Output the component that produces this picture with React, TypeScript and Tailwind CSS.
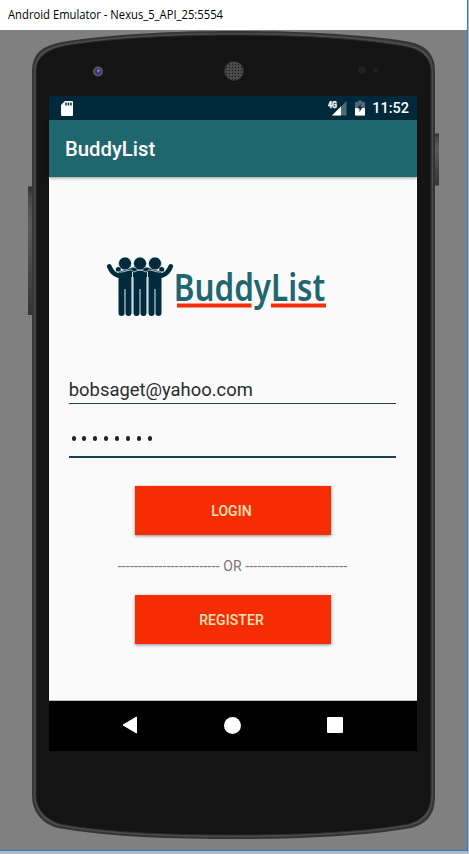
import React from "react";

function DeviceFrame() {
  const outer =
    "M32 72 C32 53 42 46 62 42 C110 34 175 31 233.500 31 C292 31 357 34 405 41 C425 44 435 53 435 72 L435 795 C435 816 426 824 411 828 C360 837 292 839 233.500 839 C175 839 107 837 58 828 C43 824 32 813 32 795 Z";
  const middle =
    "M34 72 C34 55 44 48 63 44 C110 36 175 33 233.500 33 C292 33 357 36 404 43.500 C423 47 433 55 433 72 L433 795 C433 814 424 822 410 826 C360 835 292 837 233.500 837 C175 837 107 835 59 826 C45 822 34 812 34 795 Z";
  const inner =
    "M36 72 C36 57 46 50 64 46 C110 38 175 35 233.500 35 C292 35 357 38 403 46 C421 49 431 57 431 72 L431 795 C431 812 422 820 409 824 C360 833 292 835 233.500 835 C175 835 107 833 60 824 C47 820 36 810 36 795 Z";
  return (
    <svg className="absolute inset-0" width="467" height="850" viewBox="0 0 467 850">
      <defs>
        <linearGradient id="key" x1="0" y1="0" x2="0" y2="1">
          <stop offset="0" stopColor="#303030" />
          <stop offset=".1" stopColor="#4b4b4b" />
          <stop offset=".3" stopColor="#5a5a5a" />
          <stop offset="1" stopColor="#343434" />
        </linearGradient>
        <radialGradient id="lens">
          <stop offset="0" stopColor="#6b6be0" />
          <stop offset=".4" stopColor="#292971" />
          <stop offset=".65" stopColor="#505058" />
          <stop offset="1" stopColor="#5c5c5c" />
        </radialGradient>
        <pattern id="mesh" width="3" height="3" patternUnits="userSpaceOnUse">
          <rect width="3" height="3" fill="#1e1e1e" />
          <circle cx="1.500" cy="1.500" r="1.300" fill="none" stroke="#747474" strokeWidth=".7" />
        </pattern>
      </defs>
      <rect x="28" y="186.500" width="5" height="128.500" fill="url(#key)" />
      <rect x="434" y="133.500" width="5" height="52" fill="url(#key)" />
      <path d={outer} fill="#343536" />
      <path d={middle} fill="#4a4b4c" />
      <path d={inner} fill="#141414" stroke="#2b2b2b" />
      <circle cx="98" cy="71.500" r="5" fill="url(#lens)" />
      <circle cx="98.500" cy="70.500" r="1" fill="#a9a9f0" />
      <circle cx="234" cy="71" r="9.500" fill="url(#mesh)" stroke="#333" strokeWidth=".6" />
      <circle cx="362" cy="70" r="4" fill="#202020" />
      <circle cx="375.500" cy="70" r="2.500" fill="#202020" />
    </svg>
  );
}

function StatusBar() {
  return (
    <div className="flex h-6 items-center bg-[#002a3b] pr-2 pl-3">
      <svg width="12" height="15" viewBox="0 0 12 15">
        <path d="M4 0H11Q12 0 12 1V14Q12 15 11 15H1Q0 15 0 14V4Z" fill="#fff" />
        <path d="M4.200 1.500H5.700V4.500H4.200ZM6.700 1.500H8.200V4.500H6.700ZM9.200 1.500H10.700V4.500H9.200Z" fill="#002a3b" />
      </svg>
      <div className="ml-auto flex items-center">
        <svg width="19" height="15" viewBox="0 0 19 15">
          <path d="M18.500 0V14.500H4Z" fill="#4d6a76" />
          <path d="M13 5.500V14.500H4Z" fill="#fff" />
          <text x="0" y="6.500" fill="#fff" stroke="#fff" strokeWidth=".3" fontFamily="Roboto, sans-serif" fontWeight="700" fontSize="8.500" textLength="9" lengthAdjust="spacingAndGlyphs">4G</text>
        </svg>
        <svg className="ml-2" width="10" height="16" viewBox="0 0 10 16">
          <path d="M3 .5H7V2H9.500Q10 2 10 2.600V15Q10 15.500 9.500 15.500H.5Q0 15.500 0 15V2.600Q0 2 .5 2H3Z" fill="#4d6a76" />
          <path d="M0 8H10V15Q10 15.500 9.500 15.500H.5Q0 15.500 0 15Z" fill="#fff" />
          <path d="M5.600 3.500 2.600 8.600H4.500V12.300L7.400 7.200H5.600Z" fill="#002a3b" />
        </svg>
        <span className="ml-[7px] pt-px text-[14.500px] leading-6 font-medium text-white">11:52</span>
      </div>
    </div>
  );
}

function Buddy({ x }: { x: number }) {
  return (
    <g transform={`translate(${x} 0)`}>
      <path d="M-6.500 15H6.500V56Q6.500 59 3.500 59Q.4 59 .4 56V32H-.4V56Q-.4 59 -3.500 59Q-6.500 59 -6.500 56Z" />
      <circle cx="0" cy="6.500" r="6.500" stroke="#fafafa" strokeWidth=".6" />
    </g>
  );
}

function Logo() {
  return (
    <svg width="222" height="64" viewBox="0 0 222 64" className="block overflow-visible">
      <g fill="#002b3d">
        <path d="M2.300 9.500Q5 16.500 11 18.500L15 19" fill="none" stroke="#002b3d" strokeWidth="4.800" strokeLinecap="round" />
        <path d="M63.700 9.500Q61 16.500 55 18.500L51 19" fill="none" stroke="#002b3d" strokeWidth="4.800" strokeLinecap="round" />
        <path d="M13 14.500L25.500 10.500L40.500 10.500L53 14.500L51 20H15Z" />
        <Buddy x={18} />
        <Buddy x={33} />
        <Buddy x={48} />
        <circle cx="11.300" cy="12.500" r="2.500" />
        <circle cx="54.700" cy="12.500" r="2.500" />
        <path d="M10 14.800Q15 15.800 19 14L24 12.800L27 15Q33 11.500 39 15L42 12.800L47 14Q51 15.800 56 14.800" fill="none" stroke="#d5dcde" strokeWidth=".8" />
        <path d="M25.500 15V57M40.500 15V57" stroke="#d4dade" strokeWidth="1" />
        <path d="M18 32V57M33 32V57M48 32V57" stroke="#9cabb2" strokeWidth=".6" />
      </g>
      <path d="M70 46.500H144.500V50.500H70ZM164 46.500H219V50.500H164Z" fill="#f62d06" />
      <text x="66.800" y="44.300" fill="#20666e" fontFamily="'Noto Sans', sans-serif" fontWeight="600" fontSize="38" textLength="151.500" lengthAdjust="spacingAndGlyphs">BuddyList</text>
    </svg>
  );
}

function ActionButton({ label }: { label: string }) {
  return (
    <button className="block h-[49px] w-[196px] bg-[#f62d02] pr-[2px] text-sm font-medium tracking-[0.08px] text-[#fae3bd] shadow-[0_1px_3px_rgba(0,0,0,0.45)]">
      {label}
    </button>
  );
}

function NavBar() {
  return (
    <div className="flex h-[50px] items-center justify-between bg-black pr-[74px] pb-[2px] pl-[73px]">
      <svg width="15" height="18" viewBox="0 0 15 18">
        <path d="M14.500 1V17L1 9Z" fill="#fff" stroke="#fff" strokeLinejoin="round" />
      </svg>
      <div className="size-[17px] rounded-full bg-white" />
      <div className="size-4 rounded-[1px] bg-white" />
    </div>
  );
}

export default function App() {
  return (
    <div className="h-[854px] w-[469px] overflow-hidden bg-[#b4b8c3] font-['Roboto',sans-serif]">
      <div className="relative h-[851px] w-[468px] border-r border-b border-[#1883d7] bg-[#808080]">
        <DeviceFrame />
        <div className="relative flex h-[30px] items-center bg-white pl-2 font-['Open_Sans',sans-serif] text-xs text-black">
          <span className="inline-block origin-left scale-x-[0.937] whitespace-nowrap">Android Emulator - Nexus_5_API_25:5554</span>
        </div>
        <div className="relative mt-[66px] ml-[49px] flex h-[655px] w-[368px] flex-col bg-[#fafafa]">
          <StatusBar />
          <header className="z-10 flex h-[57px] items-center bg-[#20666e] pt-[2px] pl-4 text-[20.300px] font-medium text-white shadow-[0_1px_3px_rgba(0,0,0,0.4)]">
            BuddyList
          </header>
          <main className="flex flex-1 flex-col items-center border-b border-[#bdbdbd] pt-[80px]">
            <div className="mr-[31px]"><Logo /></div>
            <div className="mt-[55px] mr-[2.500px] ml-[1px] flex h-[28px] w-[327px] items-start border-b border-[#1c4257] text-[18.400px] leading-[27px] text-[#2b2b2b]">
              bobsaget@yahoo.com
            </div>
            <div className="mr-[2px] flex h-[54px] w-[327px] items-center gap-[6.900px] border-b-2 border-[#1c4257] pt-[17px] pl-[3px]">
              {Array.from({ length: 8 }, (_, i) => (
                <span key={i} className="h-[5px] w-1 rounded-full bg-[#222]" />
              ))}
            </div>
            <div className="mt-7 mr-[1px]"><ActionButton label="LOGIN" /></div>
            <div className="mt-[21px] mr-[1px] flex h-5 items-center gap-[3.500px] text-sm whitespace-nowrap text-[#777]">
              <span className="tracking-[0.220px]">-------------------------</span>
              <span>OR</span>
              <span className="tracking-[0.220px]">-------------------------</span>
            </div>
            <div className="mt-[19px] mr-[1px]"><ActionButton label="REGISTER" /></div>
          </main>
          <NavBar />
        </div>
      </div>
    </div>
  );
}
